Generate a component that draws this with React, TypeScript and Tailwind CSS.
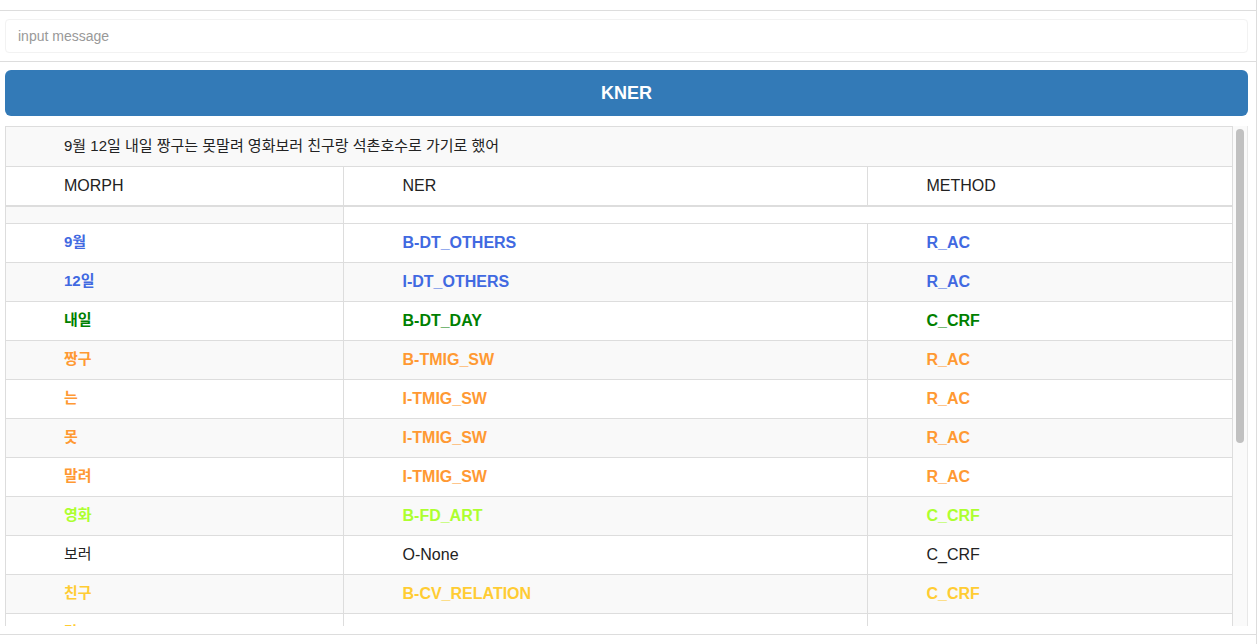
import React from 'react';

interface Row {
    morph: string;
    ner: string;
    method: string;
    color: string;
    bold: boolean;
}

const rows: Row[] = [
    { morph: '9월', ner: 'B-DT_OTHERS', method: 'R_AC', color: 'text-[#4169e1]', bold: true },
    { morph: '12일', ner: 'I-DT_OTHERS', method: 'R_AC', color: 'text-[#4169e1]', bold: true },
    { morph: '내일', ner: 'B-DT_DAY', method: 'C_CRF', color: 'text-[#008000]', bold: true },
    { morph: '짱구', ner: 'B-TMIG_SW', method: 'R_AC', color: 'text-[#ff9933]', bold: true },
    { morph: '는', ner: 'I-TMIG_SW', method: 'R_AC', color: 'text-[#ff9933]', bold: true },
    { morph: '못', ner: 'I-TMIG_SW', method: 'R_AC', color: 'text-[#ff9933]', bold: true },
    { morph: '말려', ner: 'I-TMIG_SW', method: 'R_AC', color: 'text-[#ff9933]', bold: true },
    { morph: '영화', ner: 'B-FD_ART', method: 'C_CRF', color: 'text-[#adff2f]', bold: true },
    { morph: '보러', ner: 'O-None', method: 'C_CRF', color: 'text-[#222]', bold: false },
    { morph: '친구', ner: 'B-CV_RELATION', method: 'C_CRF', color: 'text-[#ffcc33]', bold: true },
    { morph: '랑', ner: 'I-CV_RELATION', method: 'C_CRF', color: 'text-[#ffcc33]', bold: true },
];

const font = "font-['Liberation_Sans','Noto_Sans_CJK_KR',sans-serif]";

const App = () => {
    return (
        <div className={`w-[1257px] h-[644px] overflow-hidden border-r border-[#ddd] bg-white ${font} text-[14px] text-[#333]`}>
            <div className="h-[11px] border-b border-[#ddd]" />
            <div className="px-[5px] pt-[8px] pb-[8px] border-b border-[#ddd]">
                <input
                    className="w-[1243px] h-[34px] px-[12px] border border-[#f2f2f2] rounded-[4px] text-[14px] placeholder-[#999] outline-none"
                    placeholder="input message" />
            </div>
            <div className="px-[5px] pt-[8px]">
                <button className="w-[1243px] h-[46px] rounded-[6px] bg-[#337ab7] text-white text-[18px] font-bold">
                    KNER
                </button>
            </div>
            <div className="mx-[5px] mt-[10px] h-[500px] w-[1243px] flex overflow-hidden">
                <div className="w-[1228px] overflow-hidden border-l border-t border-r border-[#ddd]">
                    <table className="w-[1227px] border-collapse table-fixed">
                        <colgroup>
                            <col className="w-[337px]" />
                            <col className="w-[524px]" />
                            <col />
                        </colgroup>
                        <thead>
                            <tr className="h-[39px] bg-[#f9f9f9] border-b border-[#ddd]">
                                <td colSpan={3} className="pl-[58px] text-[15px] text-[#222]">
                                    9월 12일 내일 짱구는 못말려 영화보러 친구랑 석촌호수로 가기로 했어
                                </td>
                            </tr>
                            <tr className="h-[40px] border-b-2 border-[#ddd] text-[16px]">
                                <th className="pl-[58px] text-left font-normal text-[#222] border-r border-[#ddd]">MORPH</th>
                                <th className="pl-[59px] text-left font-normal text-[#222] border-r border-[#ddd]">NER</th>
                                <th className="pl-[59px] text-left font-normal text-[#222]">METHOD</th>
                            </tr>
                        </thead>
                        <tbody>
                            <tr className="h-[17px] border-b border-[#ddd]">
                                <td className="bg-[#f9f9f9] border-r border-[#ddd]" />
                                <td colSpan={2} />
                            </tr>
                            {rows.map((r, i) => (
                                <tr key={i} className={`h-[39px] border-b border-[#ddd] ${i % 2 === 1 ? 'bg-[#f9f9f9]' : 'bg-white'} ${r.color} ${r.bold ? 'font-bold' : ''}`}>
                                    <td className="pl-[58px] text-[15px] border-r border-[#ddd]">{r.morph}</td>
                                    <td className="pl-[59px] text-[16px] border-r border-[#ddd]">{r.ner}</td>
                                    <td className="pl-[59px] text-[16px]">{r.method}</td>
                                </tr>
                            ))}
                        </tbody>
                    </table>
                </div>
                <div className="w-[15px] bg-[#fafafa] border-r border-[#e8e8e8] pt-[3px] pl-[3px]">
                    <div className="w-[8px] h-[314px] rounded-full bg-[#c1c1c1]" />
                </div>
            </div>
            <div className="mt-[8px] border-t border-[#ddd]" />
        </div>
    );
}

export default App
